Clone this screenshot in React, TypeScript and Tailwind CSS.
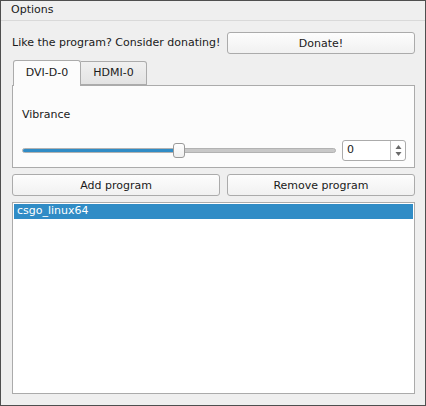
import React from 'react';

const font = { fontFamily: '"DejaVu Sans", Verdana, sans-serif' };

function Button({ label, className = '' }: { label: string; className?: string }) {
  return (
    <button className={`h-[22px] rounded-[3px] border border-[#ababab] bg-gradient-to-b from-[#fdfdfd] to-[#f1f1f1] text-[11px] text-[#1a1a1a] leading-none ${className}`}>
      {label}
    </button>
  );
}

function SpinArrows() {
  return (
    <svg width="7" height="13" viewBox="0 0 7 13" className="text-[#6a6a6a]">
      <path d="M3.5 1 L6.5 5 L0.5 5 Z" fill="currentColor" />
      <path d="M3.5 12 L6.5 8 L0.5 8 Z" fill="currentColor" />
    </svg>
  );
}

export default function App() {
  const value = 0;
  const pct = 50;

  return (
    <div style={font} className="w-[426px] h-[406px] border border-[#4f4f4f] bg-[#efefef] flex flex-col text-[11px] text-[#1a1a1a] overflow-hidden">
      {/* menu bar */}
      <div className="h-[20px] border-b border-[#d9d9d9] flex items-center pl-[10px]">
        <span>Options</span>
      </div>

      <div className="flex-1 flex flex-col pl-[11px] pr-[10px] pt-[11px] pb-[11px]">
        {/* donate row */}
        <div className="flex items-center">
          <span className="flex-1 whitespace-nowrap">Like the program? Consider donating!</span>
          <Button label="Donate!" className="w-[188px]" />
        </div>

        {/* tabs */}
        <div className="mt-[6px] flex flex-col">
          <div className="flex items-end pl-[1px] h-[26px] relative z-10">
            <div className="w-[68px] h-[26px] bg-[#fcfcfc] border border-[#ababab] border-b-0 rounded-t-[3px] flex items-center justify-center">
              DVI-D-0
            </div>
            <div className="w-[66px] h-[24px] mb-[1px] bg-gradient-to-b from-[#f0f0f0] to-[#e3e3e3] border border-[#ababab] border-l-0 rounded-tr-[3px] flex items-center justify-center">
              HDMI-0
            </div>
          </div>
          <div className="-mt-[1px] h-[83px] bg-[#fcfcfc] border border-[#ababab] pl-[9px] pr-[8px] flex flex-col">
            <div className="mt-[21px]">Vibrance</div>
            <div className="mt-[16px] flex items-center gap-[6px]">
              {/* slider */}
              <div className="flex-1 relative h-[15px] flex items-center">
                <div className="w-full h-[5px] rounded-full bg-[#c8c8c8] border border-[#b2b2b2] overflow-hidden">
                  <div className="h-full bg-[#308cc6] border-r border-[#2a6fa0]" style={{ width: `${pct}%` }} />
                </div>
                <div
                  className="absolute top-0 w-[12px] h-[15px] rounded-[3px] bg-gradient-to-b from-[#ffffff] to-[#f0f0f0] border border-[#9a9a9a]"
                  style={{ left: `calc(${pct}% - 6px)` }}
                />
              </div>
              {/* spin box */}
              <div className="w-[64px] h-[21px] rounded-[3px] border border-[#ababab] bg-white flex">
                <div className="flex-1 flex items-center pl-[4px]">{value}</div>
                <div className="w-[15px] border-l border-[#c4c4c4] flex items-center justify-center">
                  <SpinArrows />
                </div>
              </div>
            </div>
          </div>
        </div>

        {/* program buttons */}
        <div className="mt-[6px] flex gap-[7px]">
          <Button label="Add program" className="flex-1" />
          <Button label="Remove program" className="w-[188px]" />
        </div>

        {/* list */}
        <div className="mt-[6px] flex-1 bg-white border border-[#ababab] p-[1px]">
          <div className="h-[15px] bg-[#308cc6] text-white flex items-center pl-[3px]">csgo_linux64</div>
        </div>
      </div>
    </div>
  );
}
